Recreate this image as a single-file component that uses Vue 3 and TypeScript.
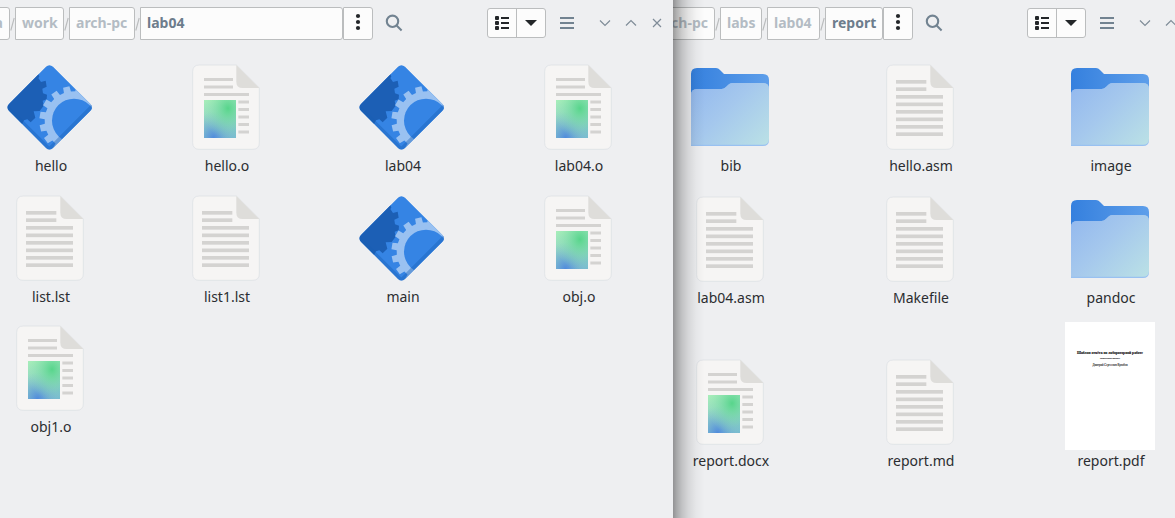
<script setup lang="ts">
type Kind = 'exec' | 'rich' | 'text' | 'folder' | 'pdf'
interface Entry { name: string; kind: Kind }
interface Crumb { label: string; width: number; current?: boolean }
interface Pane { id: string; crumbs: Crumb[]; files: Entry[] }

const panes: Pane[] = [
  {
    id: 'left',
    crumbs: [
      { label: 'a', width: 40 },
      { label: 'work', width: 49 },
      { label: 'arch-pc', width: 66 },
      { label: 'lab04', width: 203, current: true },
    ],
    files: [
      { name: 'hello', kind: 'exec' },
      { name: 'hello.o', kind: 'rich' },
      { name: 'lab04', kind: 'exec' },
      { name: 'lab04.o', kind: 'rich' },
      { name: 'list.lst', kind: 'text' },
      { name: 'list1.lst', kind: 'text' },
      { name: 'main', kind: 'exec' },
      { name: 'obj.o', kind: 'rich' },
      { name: 'obj1.o', kind: 'rich' },
    ],
  },
  {
    id: 'right',
    crumbs: [
      { label: 'arch-pc', width: 66 },
      { label: 'labs', width: 42 },
      { label: 'lab04', width: 53 },
      { label: 'report', width: 58, current: true },
    ],
    files: [
      { name: 'bib', kind: 'folder' },
      { name: 'hello.asm', kind: 'text' },
      { name: 'image', kind: 'folder' },
      { name: 'lab04.asm', kind: 'text' },
      { name: 'Makefile', kind: 'text' },
      { name: 'pandoc', kind: 'folder' },
      { name: 'report.docx', kind: 'rich' },
      { name: 'report.md', kind: 'text' },
      { name: 'report.pdf', kind: 'pdf' },
    ],
  },
]

// Outline of a cog with trapezoid teeth.
function cog(cx: number, cy: number, inner: number, outer: number, teeth: number, start: number): string {
  const step = 360 / teeth
  const pts: string[] = []
  for (let i = 0; i < teeth; i++) {
    const mid = start + i * step
    const corners: [number, number][] = [
      [inner, -step * 0.31], [outer, -step * 0.24], [outer, step * 0.24], [inner, step * 0.31],
    ]
    for (const [r, d] of corners) {
      const a = ((mid + d) * Math.PI) / 180
      pts.push(`${(cx + r * Math.cos(a)).toFixed(1)},${(cy - r * Math.sin(a)).toFixed(1)}`)
    }
  }
  return pts.join(' ')
}
const lightCog = cog(222, 197, 88, 104, 16, 103)
const diamond = 'M138 35 Q148 26 159 35 L271 147 Q281 157 271 167 L159 279 Q148 289 138 279 L27 167 Q17 157 27 147Z'
const sheet = 'M88 30 H199 L268 99 V263 Q268 283 248 283 H88 Q68 283 68 263 V50 Q68 30 88 30Z'
const textRows = [138, 160.5, 183, 205.5, 228, 250]
</script>

<template>
  <div class="desktop">
    <svg class="defs" width="0" height="0">
      <defs>
        <clipPath id="dia"><path :d="diamond" /></clipPath>
        <radialGradient id="picGreen" cx="0.75" cy="0.22" r="0.8">
          <stop offset="0" stop-color="#57d58b" /><stop offset="1" stop-color="#9ae9b6" stop-opacity="0" />
        </radialGradient>
        <radialGradient id="picBlue" cx="0.3" cy="1" r="0.7">
          <stop offset="0" stop-color="#508bdc" /><stop offset="1" stop-color="#82b6d2" stop-opacity="0" />
        </radialGradient>
        <linearGradient id="picBase" x1="0" y1="0" x2="0.3" y2="1">
          <stop offset="0" stop-color="#a9efb9" /><stop offset="1" stop-color="#79bcd0" />
        </linearGradient>
        <linearGradient id="folderBack" x1="0" y1="0" x2="1" y2="0">
          <stop offset="0" stop-color="#3580de" /><stop offset="1" stop-color="#5d9eea" />
        </linearGradient>
        <linearGradient id="folderFront" x1="0" y1="0.1" x2="1" y2="0.9">
          <stop offset="0" stop-color="#94b9ee" /><stop offset="0.45" stop-color="#a5c8ed" /><stop offset="1" stop-color="#b9dfe6" />
        </linearGradient>
      </defs>
    </svg>

    <section v-for="pane in panes" :key="pane.id" class="window" :class="pane.id">
      <header class="bar">
        <nav class="crumbs">
          <template v-for="(c, i) in pane.crumbs" :key="i">
            <svg v-if="i > 0" class="slash" width="5" height="33" viewBox="0 0 5 33"><path d="M.8 23.5 4.2 11" /></svg>
            <span class="crumb" :class="{ current: c.current }" :style="{ width: c.width + 'px' }">{{ c.label }}</span>
          </template>
          <span class="more">
            <svg width="6" height="18" viewBox="0 0 6 18"><circle cx="3" cy="3" r="2.1" /><circle cx="3" cy="9" r="2.1" /><circle cx="3" cy="15" r="2.1" /></svg>
          </span>
        </nav>
        <svg class="search" width="18" height="18" viewBox="0 0 18 18"><circle cx="7.5" cy="7.3" r="5.7" /><path d="m11.6 11.4 5 5" /></svg>
        <div class="view">
          <span class="half">
            <svg width="16" height="16" viewBox="0 0 16 16"><rect x="1" y="1" width="4" height="4" rx="1" /><rect x="1" y="6" width="4" height="4" rx="1" /><rect x="1" y="11" width="4" height="4" rx="1" /><path d="M7 2h8v2H7zM7 7h8v2H7zM7 12h8v2H7z" /></svg>
          </span>
          <span class="half">
            <svg width="12" height="6" viewBox="0 0 12 6"><path d="M0 0h12L6 6z" /></svg>
          </span>
        </div>
        <svg class="menu" width="14" height="12" viewBox="0 0 14 12"><path d="M0 0h14v2H0zM0 5h14v2H0zM0 10h14v2H0z" /></svg>
        <svg class="ctl" width="12" height="12" viewBox="0 0 12 12"><path d="m1 3.5 5 5 5-5" /></svg>
        <svg class="ctl" width="12" height="12" viewBox="0 0 12 12"><path d="m1 8.5 5-5 5 5" /></svg>
        <svg class="ctl" width="12" height="12" viewBox="0 0 12 12"><path d="m2 2 8 8m0-8-8 8" /></svg>
      </header>

      <main class="grid">
        <div v-for="f in pane.files" :key="f.name" class="item">
          <svg v-if="f.kind === 'exec'" class="icon" viewBox="21 27 258 258">
            <g clip-path="url(#dia)">
              <rect x="15" y="20" width="270" height="270" fill="#3584e4" />
              <path d="M115 57 L118 65 115 69 123 81 137 77 140 95 127 101 129 115 141 119 140 133 128 137 131 152 119 168 101 169 106 188 92 202 82 193 72 196 66 208 0 157Z" fill="#1c5fb5" />
              <polygon :points="lightCog" fill="#99c1f1" />
              <circle cx="222" cy="197" r="66" fill="#3584e4" />
              <path d="M15 153 L148 285 L285 148" fill="none" stroke="#1a5fb4" stroke-opacity="0.4" stroke-width="15" />
            </g>
          </svg>
          <svg v-else-if="f.kind === 'rich'" class="icon" viewBox="39 27 258 258">
            <path :d="sheet" fill="#f6f5f4" stroke="#d9dee2" stroke-width="2" />
            <path d="M199 30 L268 99 H218 Q199 99 199 80Z" fill="#deddda" />
            <g fill="#d4d3d1">
              <rect x="102" y="69" width="87" height="9" /><rect x="102" y="91.5" width="87" height="9" /><rect x="102" y="114" width="135" height="9" />
              <rect v-for="n in 5" :key="n" x="205" :y="114 + n * 22.5" width="32" height="9" />
            </g>
            <rect x="102" y="135" width="96" height="114" fill="url(#picBase)" />
            <rect x="102" y="135" width="96" height="114" fill="url(#picBlue)" />
            <rect x="102" y="135" width="96" height="114" fill="url(#picGreen)" />
          </svg>
          <svg v-else-if="f.kind === 'text'" class="icon" viewBox="21 45 258 258">
            <path :d="sheet" transform="translate(-18 18)" fill="#f6f5f4" stroke="#d9dee2" stroke-width="2" />
            <path d="M181 48 L250 117 H200 Q181 117 181 98Z" fill="#deddda" />
            <g fill="#d4d3d1">
              <rect x="78" y="93" width="91" height="11" /><rect x="78" y="115" width="91" height="11" />
              <rect v-for="y in textRows" :key="y" x="78" :y="y" width="141" height="11" />
            </g>
          </svg>
          <svg v-else-if="f.kind === 'folder'" class="icon" viewBox="51 27 258 258">
            <path d="M63 271 V57 Q63 39 81 39 H138 Q145 39 150 45 L162 57 H279 Q297 57 297 75 V200Z" fill="url(#folderBack)" />
            <path d="M63 273 V120 Q63 102 81 102 H155 Q162 102 168 96 L175 89 Q180 84 187 84 H280 Q297 84 297 102 V255 Q297 273 279 273Z" fill="#99c1f1" />
            <path d="M63 269 V120 Q63 102 81 102 H155 Q162 102 168 96 L175 89 Q180 84 187 84 H280 Q297 84 297 102 V251 Q297 269 279 269Z" fill="url(#folderFront)" />
          </svg>
          <svg v-else class="thumb" width="90" height="128" viewBox="0 0 90 128">
            <rect width="90" height="128" fill="#fff" />
            <text x="12" y="32" font-size="3.6" font-weight="700" textLength="66" lengthAdjust="spacingAndGlyphs" stroke="#111" stroke-width=".1">Шаблон отчёта по лабораторной работе</text>
            <text x="35" y="37.2" font-size="2.7" textLength="20" lengthAdjust="spacingAndGlyphs" stroke="#333" stroke-width=".12">Простейший вариант</text>
            <text x="27.5" y="44" font-size="3.2" textLength="35" lengthAdjust="spacingAndGlyphs" stroke="#333" stroke-width=".08">Дмитрий Сергеевич Кулябов</text>
          </svg>
          <span class="label">{{ f.name }}</span>
        </div>
      </main>
    </section>
  </div>
</template>

<style>
body { margin: 0; overflow: hidden; }
</style>

<style scoped>
.desktop {
  display: flex;
  width: 1175px;
  height: 518px;
  overflow: hidden;
  background: #eeeff1;
  font-family: "Noto Sans", sans-serif;
  font-size: 14px;
  color: #2b2d30;
}
.defs { position: absolute; }
.window { overflow: hidden; height: 518px; background: #eeeff1; flex: none; }
.left { width: 673px; }
.right { width: 502px; position: relative; }
.right::before {
  content: "";
  position: absolute;
  z-index: 2;
  inset: 0 auto 0 0;
  width: 32px;
  background: linear-gradient(90deg, rgba(0,0,0,.39), rgba(0,0,0,.29) 12%, rgba(0,0,0,.19) 28%, rgba(0,0,0,.1) 48%, rgba(0,0,0,.035) 72%, transparent);
}
.bar { display: flex; align-items: center; height: 46px; box-sizing: border-box; width: 703px; }
.left .bar { margin-left: -30px; }
.right .bar { margin-left: -24px; }
.crumbs { display: flex; flex: none; height: 33px; }
.slash { flex: none; fill: none; stroke: #b9bbbc; stroke-width: 1.1; }
.crumb {
  box-sizing: border-box;
  flex: none;
  height: 33px;
  padding: 0 6px;
  border: 1px solid #bbbdbe;
  border-radius: 0 3px 3px 0;
  background: #fcfcfc;
  color: #b4bcc4;
  font-weight: 700;
  line-height: 30px;
  white-space: nowrap;
}
.crumb:first-child { text-align: right; }
.crumb.current { color: #6d7d8c; }
.more {
  display: flex;
  align-items: center;
  justify-content: center;
  box-sizing: border-box;
  width: 30px;
  height: 33px;
  border: 1px solid #bbbdbe;
  border-radius: 1px 3px 3px 1px;
  background: #fcfcfc;
  fill: #232629;
}
.more svg { margin-bottom: 2px; }
.search { flex: none; margin-left: 12px; fill: none; stroke: #728391; stroke-width: 2.1; }
.view {
  display: flex;
  box-sizing: border-box;
  flex: none;
  width: 59px;
  height: 30px;
  margin-left: 84px;
  border: 1px solid #bbbdbe;
  border-radius: 3px;
  background: #fcfcfc;
  fill: #232629;
}
.half { display: flex; flex: 1; align-items: center; justify-content: center; }
.half + .half { border-left: 1px solid #bbbdbe; }
.menu { flex: none; margin-left: 14px; fill: #728391; }
.ctl { flex: none; margin-left: 14px; fill: none; stroke: #7f8c98; stroke-width: 1.2; }
.menu + .ctl { margin-left: 25px; }
.grid { display: grid; margin: 18px 0 0 -38px; justify-items: center; }
.left .grid { grid-template-columns: repeat(4, 176px); grid-template-rows: 131px 130px 112px; }
.right .grid { grid-template-columns: repeat(3, 190px); grid-template-rows: 132px 132px 143px; }
.item { display: flex; flex-direction: column; align-items: center; gap: 6px; }
.right .item:nth-child(n + 7) { align-self: end; }
.icon { width: 86px; height: 86px; }
.thumb { margin-bottom: -5px; font-family: "Liberation Serif", serif; }
.label { height: 20px; line-height: 20px; padding-left: 2px; white-space: nowrap; }
</style>
